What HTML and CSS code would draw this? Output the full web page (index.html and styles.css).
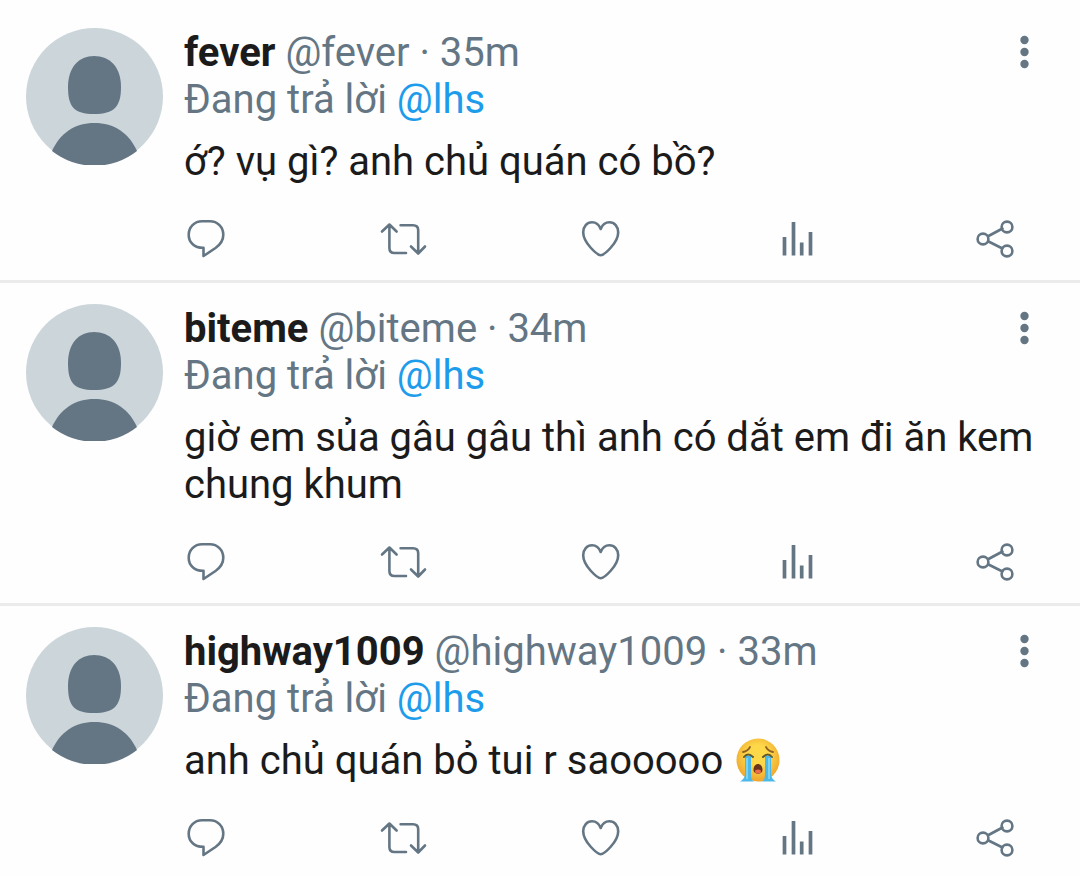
FILE: index.html
```
<!DOCTYPE html>
<html lang="vi">
<head>
    <meta charset="UTF-8">
    <meta name="viewport" content="width=device-width, initial-scale=1.0">
    <title>Replies</title>
    <link rel="stylesheet" href="styles.css">
</head>
<body>
    <!-- Shared icons -->
    <svg class="sprite" aria-hidden="true">
        <symbol id="avatar" viewBox="0 0 137 137">
            <circle cx="68.5" cy="68.5" r="68.5" fill="#ccd6da"/>
            <path d="M68 28C84 28 95 39 95 59C95 79 88 86 68 86C48 86 42 79 42 59C42 39 53 28 68 28Z" fill="#647684"/>
            <path d="M26 123C34 105 49 95 68.5 95C88 95 103 105 111 123A68.5 68.5 0 0 1 26 123Z" fill="#647684"/>
        </symbol>
        <symbol id="reply" viewBox="0 0 44 44">
            <path d="M18 4.200H26C33.500 4.200 39.300 10 39.300 17.800C39.300 23.500 36.500 27.500 31.500 31L19.500 39V30.800C10.500 31 4.700 25.500 4.700 17.800C4.700 10 10.500 4.200 18 4.200Z"/>
        </symbol>
        <symbol id="retweet" viewBox="0 0 44 44">
            <path d="M1 14.500L8.400 7.500L15.600 14.500M8.400 8V31Q8.400 36 13.400 36H25M19.600 8.200H32Q37.200 8.200 37.200 13.200V36M30 29.500L37.200 36.500L44 29.500"/>
        </symbol>
        <symbol id="like" viewBox="0 0 44 44">
            <path d="M21.700 38.200C18.500 38.200 4.200 26 4.200 15.200C4.200 9.500 8 5.200 13 5.200C17 5.200 20 7.500 21.700 12C23.400 7.500 26.400 5.200 30.400 5.200C35.400 5.200 39.200 9.500 39.200 15.200C39.200 26 25 38.200 21.700 38.200Z"/>
        </symbol>
        <symbol id="stats" viewBox="0 0 44 44">
            <path d="M8.500 20V38.500M17.500 5V38.500M25.700 25.500V38.500M34.500 15V38.500" stroke-width="3.700"/>
        </symbol>
        <symbol id="share" viewBox="0 0 44 44">
            <path d="M15.500 19L29.500 11.500M15.500 24.500L29.500 31.500"/>
            <circle cx="10" cy="22" r="5.400"/>
            <circle cx="34" cy="10" r="5.400"/>
            <circle cx="34" cy="34" r="5.400"/>
        </symbol>
        <symbol id="dots" viewBox="0 0 44 44">
            <g fill="#647684" stroke="none">
                <circle cx="22.500" cy="10" r="4.200"/>
                <circle cx="22.500" cy="22" r="4.200"/>
                <circle cx="22.500" cy="34" r="4.200"/>
            </g>
        </symbol>
    </svg>

    <main class="replies">
        <article class="tweet">
            <svg class="avatar" aria-hidden="true"><use href="#avatar"/></svg>
            <div class="content">
                <div class="header">
                    <div class="meta"><strong class="name">fever</strong> @fever · 35m</div>
                    <button class="more" type="button" aria-label="More"><svg class="icon"><use href="#dots"/></svg></button>
                </div>
                <div class="meta">Đang trả lời <a href="#">@lhs</a></div>
                <p class="text">ớ? vụ gì? anh chủ quán có bồ?</p>
                <div class="actions">
                    <button type="button" aria-label="Reply"><svg class="icon"><use href="#reply"/></svg></button>
                    <button type="button" aria-label="Retweet"><svg class="icon"><use href="#retweet"/></svg></button>
                    <button type="button" aria-label="Like"><svg class="icon"><use href="#like"/></svg></button>
                    <button type="button" aria-label="Stats"><svg class="icon stats"><use href="#stats"/></svg></button>
                    <button type="button" aria-label="Share"><svg class="icon"><use href="#share"/></svg></button>
                </div>
            </div>
        </article>

        <article class="tweet">
            <svg class="avatar" aria-hidden="true"><use href="#avatar"/></svg>
            <div class="content">
                <div class="header">
                    <div class="meta"><strong class="name">biteme</strong> @biteme · 34m</div>
                    <button class="more" type="button" aria-label="More"><svg class="icon"><use href="#dots"/></svg></button>
                </div>
                <div class="meta">Đang trả lời <a href="#">@lhs</a></div>
                <p class="text">giờ em sủa gâu gâu thì anh có dắt em đi ăn kem chung khum</p>
                <div class="actions">
                    <button type="button" aria-label="Reply"><svg class="icon"><use href="#reply"/></svg></button>
                    <button type="button" aria-label="Retweet"><svg class="icon"><use href="#retweet"/></svg></button>
                    <button type="button" aria-label="Like"><svg class="icon"><use href="#like"/></svg></button>
                    <button type="button" aria-label="Stats"><svg class="icon stats"><use href="#stats"/></svg></button>
                    <button type="button" aria-label="Share"><svg class="icon"><use href="#share"/></svg></button>
                </div>
            </div>
        </article>

        <article class="tweet">
            <svg class="avatar" aria-hidden="true"><use href="#avatar"/></svg>
            <div class="content">
                <div class="header">
                    <div class="meta"><strong class="name">highway1009</strong> @highway1009 · 33m</div>
                    <button class="more" type="button" aria-label="More"><svg class="icon"><use href="#dots"/></svg></button>
                </div>
                <div class="meta">Đang trả lời <a href="#">@lhs</a></div>
                <p class="text">anh chủ quán bỏ tui r saooooo
                    <svg class="emoji" viewBox="0 0 44 44" role="img" aria-label="😭">
                        <defs>
                            <radialGradient id="face" cx=".5" cy=".4" r=".6">
                                <stop offset=".4" stop-color="#fdd94a"/>
                                <stop offset="1" stop-color="#efa32c"/>
                            </radialGradient>
                        </defs>
                        <circle cx="22" cy="22" r="21.500" fill="url(#face)"/>
                        <path d="M7 14Q12 13 14 9M30 9Q32 13 37 14" fill="none" stroke="#8f6024" stroke-width="1.800" stroke-linecap="round"/>
                        <path d="M9 18H15V37Q15 42 18 43.500H4Q9 41 9 36ZM29 18H35V36Q35 41 40 43.500H26Q29 42 29 37Z" fill="#4cb8e8"/>
                        <path d="M11 20V41M33 20V41" fill="none" stroke="#8bdcf7" stroke-width="1.500"/>
                        <path d="M8 19Q12 14 17 19M27 19Q32 14 36 19" fill="none" stroke="#5d5a33" stroke-width="2" stroke-linecap="round"/>
                        <path d="M17.500 32C17.500 24 26.500 24 26.500 32C26.500 37 17.500 37 17.500 32Z" fill="#6b351c"/>
                        <ellipse cx="22" cy="33.500" rx="3" ry="2" fill="#ef6a4c"/>
                    </svg>
                </p>
                <div class="actions">
                    <button type="button" aria-label="Reply"><svg class="icon"><use href="#reply"/></svg></button>
                    <button type="button" aria-label="Retweet"><svg class="icon"><use href="#retweet"/></svg></button>
                    <button type="button" aria-label="Like"><svg class="icon"><use href="#like"/></svg></button>
                    <button type="button" aria-label="Stats"><svg class="icon stats"><use href="#stats"/></svg></button>
                    <button type="button" aria-label="Share"><svg class="icon"><use href="#share"/></svg></button>
                </div>
            </div>
        </article>
    </main>
</body>
</html>
```
FILE: styles.css
```
body {
    margin: 0;
    background-color: #fefefe;
    font-family: Roboto, sans-serif;
    font-size: 40px;
    line-height: 47px;
    color: #1b1b1b;
}
.sprite {
    display: none;
}
.replies {
    padding-top: 7px;
}
.tweet {
    display: flex;
    gap: 21px;
    padding: 21px 26px 19px;
    border-bottom: 3px solid #ebebeb;
}
.tweet:last-child {
    border-bottom: none;
    padding-bottom: 16px;
}
.avatar {
    flex: none;
    width: 137px;
    height: 137px;
}
.content {
    flex: 1;
    min-width: 0;
    padding-top: 1px;
}
.header {
    display: flex;
    justify-content: space-between;
}
.meta {
    color: #647684;
}
.name {
    font-weight: 700;
    color: #1b1b1b;
}
a {
    color: #1d9ceb;
    text-decoration: none;
}
.text {
    margin: 15px 0 32px;
}
button {
    display: block;
    padding: 0;
    border: none;
    background: none;
    cursor: pointer;
}
.more {
    width: 60px;
    height: 46px;
}
.icon {
    display: block;
    width: 44px;
    height: 44px;
    margin: 0 auto;
    overflow: visible;
    fill: none;
    stroke: #647684;
    stroke-width: 2.6px;
    stroke-linecap: round;
    stroke-linejoin: round;
}
.stats {
    stroke-linecap: butt;
}
symbol {
    overflow: visible;
}
.actions {
    display: flex;
    justify-content: space-between;
    margin-right: 37px;
}
.emoji {
    width: 44px;
    height: 44px;
    margin-left: 3px;
    vertical-align: -8px;
}
```
